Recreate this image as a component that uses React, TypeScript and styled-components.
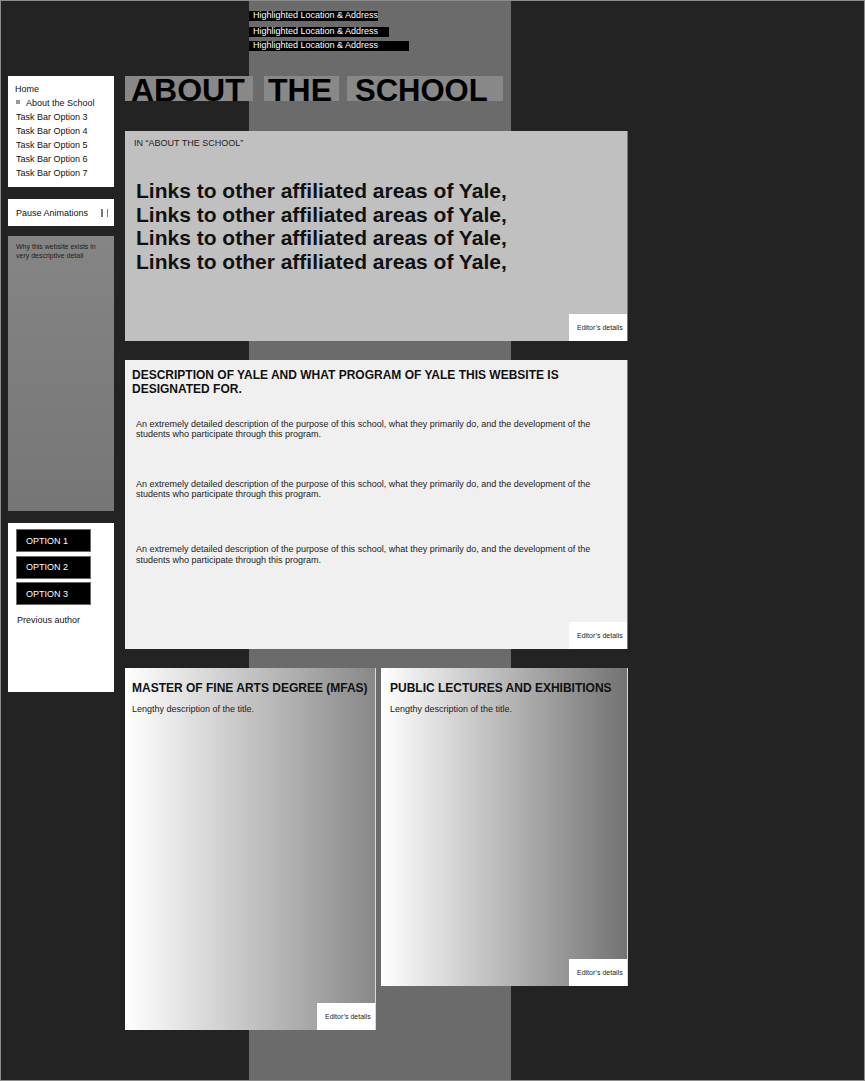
import React from "react";
import styled, { createGlobalStyle } from "styled-components";

const Global = createGlobalStyle`
  html, body { margin: 0; padding: 0; background: #232323; }
  body { font-family: "Liberation Sans", Arial, sans-serif; color: #111; }
  * { box-sizing: border-box; }
`;

const Page = styled.div`
  width: 865px;
  height: 1081px;
  border: 1px solid #8c8c8c;
  background: linear-gradient(
    to right,
    #232323 0 248px,
    #6b6b6b 248px 510px,
    #232323 510px 100%
  );
  padding-top: 10px;
  overflow: hidden;
`;

const AddressList = styled.div`
  margin-left: 248px;
  display: flex;
  flex-direction: column;
  align-items: flex-start;
`;

const AddressBar = styled.div<{ $w: number; $mt: number }>`
  width: ${(p) => p.$w}px;
  height: 10px;
  margin-top: ${(p) => p.$mt}px;
  background: #000;
  color: #fff;
  font-size: 9px;
  line-height: 9.5px;
  padding-left: 4px;
  white-space: nowrap;
`;

const Layout = styled.div`
  display: flex;
  align-items: flex-start;
  gap: 11px;
  margin: 25px 0 0 7px;
`;

const Sidebar = styled.aside`
  width: 106px;
  display: flex;
  flex-direction: column;
`;

const NavPanel = styled.nav`
  height: 111px;
  background: #fff;
  padding: 6px 0 7px 0;
`;

const NavItem = styled.div<{ $indent: number }>`
  display: flex;
  align-items: flex-start;
  padding-left: ${(p) => p.$indent}px;
  font-size: 9px;
  line-height: 14px;
  color: #111;
  white-space: nowrap;
`;

const Bullet = styled.span`
  width: 4px;
  height: 4px;
  margin: 4px 6px 0 0;
  background: #9a9a9a;
`;

const PausePanel = styled.div`
  margin-top: 12px;
  height: 27px;
  background: #fff;
  display: flex;
  align-items: center;
  justify-content: space-between;
  padding: 0 6px 0 8px;
  font-size: 9px;
  color: #111;
`;

const PauseIcon = styled.span`
  display: flex;
  gap: 4px;
  margin-top: 1px;
`;

const PauseBar = styled.span`
  width: 1.5px;
  height: 8px;
  background: #7a7a7a;
`;

const InfoPanel = styled.div`
  margin-top: 10px;
  height: 275px;
  background: linear-gradient(#858585, #767676);
  padding: 6px 12px 0 8px;
  font-size: 7px;
  line-height: 9px;
  color: #1c1c1c;
`;

const OptionsPanel = styled.div`
  margin-top: 12px;
  height: 169px;
  background: #fff;
  padding: 6px 0 0 8px;
  display: flex;
  flex-direction: column;
  align-items: flex-start;
  gap: 3.5px;
`;

const OptionButton = styled.button`
  width: 75px;
  height: 23px;
  background: #000;
  border: 1px solid #6a6a6a;
  color: #fff;
  font-family: inherit;
  font-size: 9px;
  text-align: left;
  padding: 0 0 0 9px;
  display: flex;
  align-items: center;
`;

const PrevAuthor = styled.div`
  margin: 6px 0 0 1px;
  font-size: 9px;
  line-height: 10.35px;
  color: #111;
`;

const Main = styled.main`
  width: 503px;
  display: flex;
  flex-direction: column;
`;

const Heading = styled.h1`
  margin: 0 0 30px;
  display: flex;
  height: 25px;
  font-size: 32px;
  font-weight: 700;
  color: #000;
`;

const Word = styled.span<{ $w: number; $pl: number; $ml: number; $fs: number; $lh: number }>`
  display: block;
  width: ${(p) => p.$w}px;
  height: 25px;
  margin-left: ${(p) => p.$ml}px;
  padding-left: ${(p) => p.$pl}px;
  background: #888;
  font-size: ${(p) => p.$fs}px;
  line-height: ${(p) => p.$lh}px;
  white-space: nowrap;
`;

const Panel = styled.section<{ $h: number; $bg: string; $mt: number }>`
  height: ${(p) => p.$h}px;
  margin-top: ${(p) => p.$mt}px;
  background: ${(p) => p.$bg};
  border-right: 1px solid #7a7a7a;
  display: flex;
  flex-direction: column;
`;

const Crumb = styled.div`
  padding: 7px 0 0 9px;
  font-size: 9px;
  line-height: 10.35px;
  color: #222;
`;

const Links = styled.div`
  margin-top: 31px;
  padding-left: 11px;
  font-size: 21px;
  font-weight: 700;
  line-height: 23.5px;
  color: #111;
`;

const EditorBox = styled.div`
  margin-top: auto;
  align-self: flex-end;
  width: 58px;
  height: 27px;
  background: #fff;
  padding-left: 8px;
  display: flex;
  align-items: center;
  font-size: 7px;
  color: #222;
  white-space: nowrap;
`;

const SectionTitle = styled.h2`
  margin: 0;
  padding: 8px 20px 0 7px;
  font-size: 12px;
  line-height: 14.4px;
  font-weight: 700;
  color: #111;
`;

const Paragraph = styled.p<{ $mt: number }>`
  margin: ${(p) => p.$mt}px 0 0;
  padding: 0 20px 0 11px;
  font-size: 9px;
  line-height: 10.35px;
  color: #222;
`;

const CardRow = styled.div`
  margin-top: 19px;
  display: flex;
  align-items: flex-start;
  gap: 5px;
`;

const Card = styled.article<{ $w: number; $h: number; $end: string; $pl: number }>`
  width: ${(p) => p.$w}px;
  height: ${(p) => p.$h}px;
  background: linear-gradient(to right, #ffffff, ${(p) => p.$end});
  border-right: 1px solid rgba(0, 0, 0, 0.15);
  display: flex;
  flex-direction: column;
  --card-pad: ${(p) => p.$pl}px;
`;

const CardTitle = styled.h3`
  margin: 0;
  padding: 13px 0 0 var(--card-pad);
  font-size: 12px;
  line-height: 14.4px;
  font-weight: 700;
  color: #111;
  white-space: nowrap;
`;

const CardText = styled.p`
  margin: 9px 0 0;
  padding-left: var(--card-pad);
  font-size: 9px;
  line-height: 10.35px;
  color: #222;
`;

const addresses = [
  { w: 129, mt: 0 },
  { w: 140, mt: 6 },
  { w: 160, mt: 4 },
];
const navItems = [
  "Task Bar Option 3",
  "Task Bar Option 4",
  "Task Bar Option 5",
  "Task Bar Option 6",
  "Task Bar Option 7",
];
const desc =
  "An extremely detailed description of the purpose of this school, what they primarily do, and the development of the students who participate through this program.";
const link = "Links to other affiliated areas of Yale,";

export default function App() {
  return (
    <>
      <Global />
      <Page>
        <AddressList>
          {addresses.map((a, i) => (
            <AddressBar key={i} $w={a.w} $mt={a.mt}>
              Highlighted Location &amp; Address
            </AddressBar>
          ))}
        </AddressList>
        <Layout>
          <Sidebar>
            <NavPanel>
              <NavItem $indent={7}>Home</NavItem>
              <NavItem $indent={8}>
                <Bullet />
                About the School
              </NavItem>
              {navItems.map((t) => (
                <NavItem key={t} $indent={8}>
                  {t}
                </NavItem>
              ))}
            </NavPanel>
            <PausePanel>
              <span>Pause Animations</span>
              <PauseIcon>
                <PauseBar />
                <PauseBar />
              </PauseIcon>
            </PausePanel>
            <InfoPanel>Why this website exists in very descriptive detail</InfoPanel>
            <OptionsPanel>
              <OptionButton>OPTION 1</OptionButton>
              <OptionButton>OPTION 2</OptionButton>
              <OptionButton>OPTION 3</OptionButton>
              <PrevAuthor>Previous author</PrevAuthor>
            </OptionsPanel>
          </Sidebar>
          <Main>
            <Heading>
              <Word $w={128} $pl={6} $ml={0} $fs={32} $lh={28}>
                ABOUT
              </Word>
              <Word $w={75} $pl={4} $ml={11} $fs={32} $lh={28}>
                THE
              </Word>
              <Word $w={156} $pl={8} $ml={8} $fs={31} $lh={30}>
                SCHOOL
              </Word>
            </Heading>
            <Panel $h={210} $bg="#c0c0c0" $mt={0}>
              <Crumb>IN “ABOUT THE SCHOOL”</Crumb>
              <Links>
                {link}
                <br />
                {link}
                <br />
                {link}
                <br />
                {link}
              </Links>
              <EditorBox>Editor’s details</EditorBox>
            </Panel>
            <Panel $h={289} $bg="#f0f0f0" $mt={19}>
              <SectionTitle>
                DESCRIPTION OF YALE AND WHAT PROGRAM OF YALE THIS WEBSITE IS DESIGNATED FOR.
              </SectionTitle>
              <Paragraph $mt={22}>{desc}</Paragraph>
              <Paragraph $mt={39}>{desc}</Paragraph>
              <Paragraph $mt={45}>{desc}</Paragraph>
              <EditorBox>Editor’s details</EditorBox>
            </Panel>
            <CardRow>
              <Card $w={251} $h={362} $end="#888888" $pl={7}>
                <CardTitle>MASTER OF FINE ARTS DEGREE (MFAS)</CardTitle>
                <CardText>Lengthy description of the title.</CardText>
                <EditorBox>Editor’s details</EditorBox>
              </Card>
              <Card $w={247} $h={318} $end="#727272" $pl={9}>
                <CardTitle>PUBLIC LECTURES AND EXHIBITIONS</CardTitle>
                <CardText>Lengthy description of the title.</CardText>
                <EditorBox>Editor’s details</EditorBox>
              </Card>
            </CardRow>
          </Main>
        </Layout>
      </Page>
    </>
  );
}
